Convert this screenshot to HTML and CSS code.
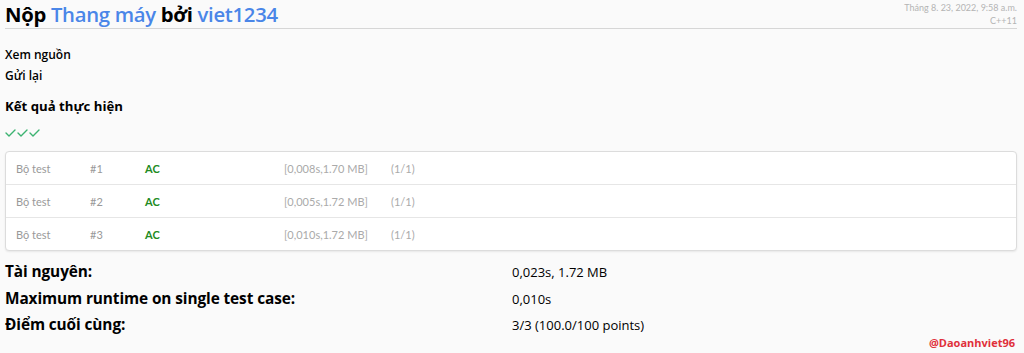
FILE: index.html
```html
<!DOCTYPE html>
<html lang="vi">
<head>
<meta charset="utf-8">
<link rel="stylesheet" href="styles.css">
</head>
<body>
<div class="page">
  <header class="head">
    <h2 class="title">Nộp <a class="link">Thang máy</a> bởi <a class="link">viet1234</a></h2>
    <div class="meta">
      <div>Tháng 8. 23, 2022, 9:58 a.m.</div>
      <div>C++11</div>
    </div>
  </header>
  <div class="actions">
    <div class="action">Xem nguồn</div>
    <div class="action">Gửi lại</div>
  </div>
  <h3 class="sub">Kết quả thực hiện</h3>
  <div class="checks">
    <svg width="36" height="10" viewBox="0 0 36 10"><g fill="none" stroke="#3cb371" stroke-width="1.4" stroke-linecap="round" stroke-linejoin="round"><path d="M1 5 L4 8 L10 2"/><path d="M13 5 L16 8 L22 2"/><path d="M25 5 L28 8 L34 2"/></g></svg>
  </div>
  <div class="cases">
    <div class="row"><span class="c-name">Bộ test</span><span class="c-num">#1</span><span class="c-ac">AC</span><span class="c-res">[0,008s,1.70 MB]</span><span class="c-pts">(1/1)</span></div>
    <div class="row"><span class="c-name">Bộ test</span><span class="c-num">#2</span><span class="c-ac">AC</span><span class="c-res">[0,005s,1.72 MB]</span><span class="c-pts">(1/1)</span></div>
    <div class="row"><span class="c-name">Bộ test</span><span class="c-num">#3</span><span class="c-ac">AC</span><span class="c-res">[0,010s,1.72 MB]</span><span class="c-pts">(1/1)</span></div>
  </div>
  <div class="summary">
    <div class="s-label">Tài nguyên:</div><div class="s-val">0,023s, 1.72 MB</div>
    <div class="s-label">Maximum runtime on single test case:</div><div class="s-val">0,010s</div>
    <div class="s-label">Điểm cuối cùng:</div><div class="s-val">3/3 (100.0/100 points)</div>
  </div>
  <div class="mark">@Daoanhviet96</div>
</div>
</body>
</html>
```

FILE: styles.css
```css
html, body {
  margin: 0;
  padding: 0;
  background: #fafafa;
}
body {
  font-family: "Open Sans", "Noto Sans", sans-serif;
  color: #000;
  width: 1024px;
  height: 353px;
  overflow: hidden;
}
.page {
  padding: 0 7px 0 5px;
  position: relative;
  height: 353px;
  box-sizing: border-box;
}
.head {
  display: flex;
  justify-content: space-between;
  align-items: flex-start;
  border-bottom: 1px solid #d6d6d6;
  height: 28px;
}
.title {
  margin: 0;
  font-size: 20.3px;
  font-weight: 700;
  line-height: 30px;
  margin-top: -1px;
  letter-spacing: -0.3px;
}
.link {
  color: #4a86e8;
  font-weight: 600;
}
.meta {
  text-align: right;
  font-size: 9px;
  line-height: 13px;
  color: #b4b4b4;
  padding-top: 1px;
  font-family: "Lato", sans-serif;
}
.actions {
  margin-top: 16px;
}
.action {
  font-size: 12px;
  font-weight: 600;
  line-height: 20px;
  height: 21px;
}
.sub {
  margin: 9px 0 0;
  font-size: 13.2px;
  font-weight: 700;
  line-height: 20px;
}
.checks {
  margin-top: 7px;
  height: 20px;
  display: flex;
  align-items: center;
}
.cases {
  margin-top: 8px;
  background: #fff;
  border: 1px solid #dcdcdc;
  border-radius: 4px;
  box-shadow: 0 1px 2px rgba(0,0,0,0.08);
  font-family: "Lato", sans-serif;
  font-size: 11px;
}
.row {
  display: flex;
  align-items: center;
  height: 32px;
  border-top: 1px solid #e6e6e6;
  padding-left: 10px;
}
.row:first-child {
  border-top: none;
}
.c-name { width: 74px; color: #999; }
.c-num { width: 55px; color: #999; }
.c-ac { width: 139px; color: #228b22; font-weight: 700; }
.c-res { width: 107px; color: #aaa; }
.c-pts { color: #aaa; }
.summary {
  margin-top: 8px;
  display: grid;
  grid-template-columns: 507px 1fr;
  row-gap: 0;
}
.s-label {
  font-size: 15.4px;
  font-weight: 700;
  line-height: 26.5px;
  letter-spacing: -0.1px;
}
.s-val {
  font-size: 13px;
  line-height: 26.5px;
}
.mark {
  position: absolute;
  right: 9px;
  bottom: 3px;
  color: #e0303a;
  font-weight: 700;
  font-size: 11px;
}
```
